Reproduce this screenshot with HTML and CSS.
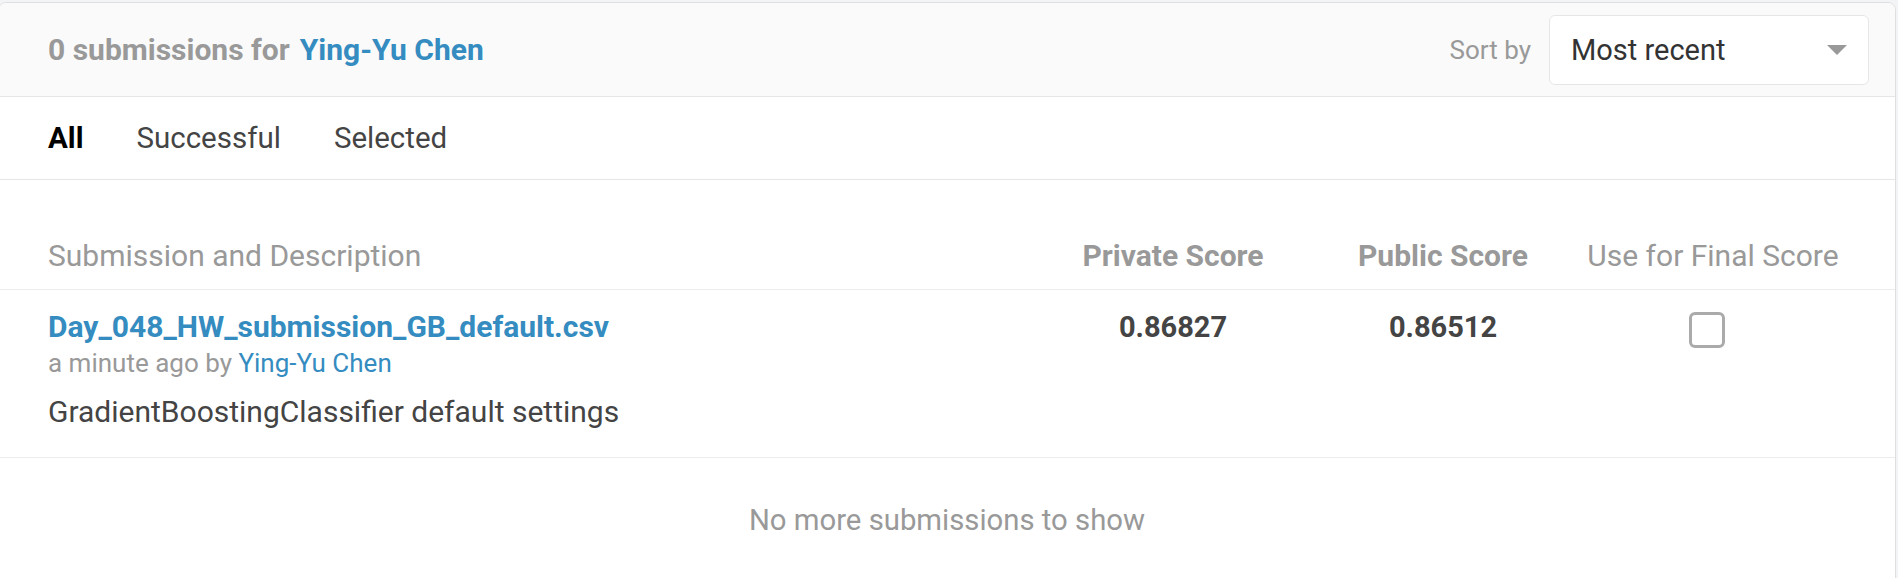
FILE: index.html
```html
<!DOCTYPE html>
<html lang="en">
<head>
<meta charset="utf-8">
<title>Submissions</title>
<link rel="stylesheet" href="styles.css">
</head>
<body>
<div class="card">
  <div class="card-head">
    <div class="title">
      <span class="count">0 submissions for</span>
      <a class="user" href="#">Ying-Yu Chen</a>
    </div>
    <div class="sort">
      <span class="sort-label">Sort by</span>
      <div class="select">
        <span class="select-value">Most recent</span>
        <span class="caret"></span>
      </div>
    </div>
  </div>
  <nav class="tabs">
    <a class="tab active" href="#">All</a>
    <a class="tab" href="#">Successful</a>
    <a class="tab" href="#">Selected</a>
  </nav>
  <div class="table">
    <div class="row row-head">
      <div class="col-desc">Submission and Description</div>
      <div class="col-score bold">Private Score</div>
      <div class="col-score bold">Public Score</div>
      <div class="col-score">Use for Final Score</div>
    </div>
    <div class="row row-item">
      <div class="col-desc">
        <a class="file" href="#">Day_048_HW_submission_GB_default.csv</a>
        <div class="meta">a minute ago by <a class="meta-user" href="#">Ying-Yu Chen</a></div>
        <div class="desc">GradientBoostingClassifier default settings</div>
      </div>
      <div class="col-score value">0.86827</div>
      <div class="col-score value">0.86512</div>
      <div class="col-score"><span class="checkbox"></span></div>
    </div>
  </div>
  <div class="footer">No more submissions to show</div>
</div>
</body>
</html>
```
FILE: styles.css
```css
html, body {
  margin: 0;
  padding: 0;
}
body {
  background: #f3f4f5;
  font-family: Roboto, "Liberation Sans", Arial, sans-serif;
  color: #444;
  overflow: hidden;
}
a {
  text-decoration: none;
}
.card {
  margin: 2px 2px 0 -2px;
  background: #fff;
  border: 1px solid #dfdfdf;
  border-radius: 8px 8px 0 0;
  min-height: 600px;
  overflow: hidden;
}
.card-head {
  height: 93px;
  background: #fafafa;
  border-bottom: 1px solid #e6e6e6;
  display: flex;
  align-items: center;
  justify-content: space-between;
  padding: 0 26px 0 49px;
}
.title {
  display: flex;
  align-items: baseline;
  gap: 10px;
  font-size: 30px;
  font-weight: 700;
}
.count {
  color: #999;
}
.user {
  color: #348cc0;
}
.sort {
  display: flex;
  align-items: center;
  gap: 18px;
}
.sort-label {
  font-size: 26px;
  color: #999;
}
.select {
  width: 318px;
  height: 68px;
  background: #fff;
  border: 1px solid #e6e6e6;
  border-radius: 6px;
  display: flex;
  align-items: center;
  justify-content: space-between;
}
.select-value {
  padding-left: 21px;
  font-size: 29px;
  color: #333;
}
.caret {
  margin-right: 21px;
  width: 0;
  height: 0;
  border-left: 10px solid transparent;
  border-right: 10px solid transparent;
  border-top: 10px solid #999;
}
.tabs {
  height: 82px;
  border-bottom: 1px solid #e6e6e6;
  display: flex;
  align-items: center;
  gap: 53px;
  padding: 0 49px;
}
.tab {
  font-size: 29.5px;
  color: #444;
}
.tab.active {
  color: #000;
  font-weight: 700;
}
.table {
  padding-top: 58px;
}
.row {
  display: grid;
  grid-template-columns: 1fr 270px 270px 270px;
  padding: 0 47px 0 49px;
  align-items: start;
}
.row-head {
  font-size: 30px;
  line-height: 36px;
  color: #999;
  padding-bottom: 15px;
  border-bottom: 1px solid #ececec;
}
.col-score {
  display: flex;
  justify-content: center;
}
.bold {
  font-weight: 700;
}
.row-item {
  padding-top: 19px;
  padding-bottom: 27px;
  border-bottom: 1px solid #ececec;
}
.file {
  display: block;
  font-size: 30px;
  line-height: 36px;
  font-weight: 700;
  color: #348cc0;
}
.meta {
  margin-top: 3px;
  font-size: 26px;
  line-height: 30px;
  color: #999;
}
.meta-user {
  color: #348cc0;
}
.desc {
  margin-top: 16px;
  font-size: 30px;
  line-height: 36px;
  color: #444;
}
.value {
  font-size: 29px;
  line-height: 36px;
  font-weight: 700;
  color: #444;
}
.checkbox {
  display: block;
  width: 30px;
  height: 30px;
  margin-top: 3px;
  margin-right: 12px;
  border: 3px solid #aaa;
  border-radius: 6px;
}
.footer {
  padding-top: 44px;
  text-align: center;
  font-size: 29.3px;
  line-height: 36px;
  color: #999;
}
```
